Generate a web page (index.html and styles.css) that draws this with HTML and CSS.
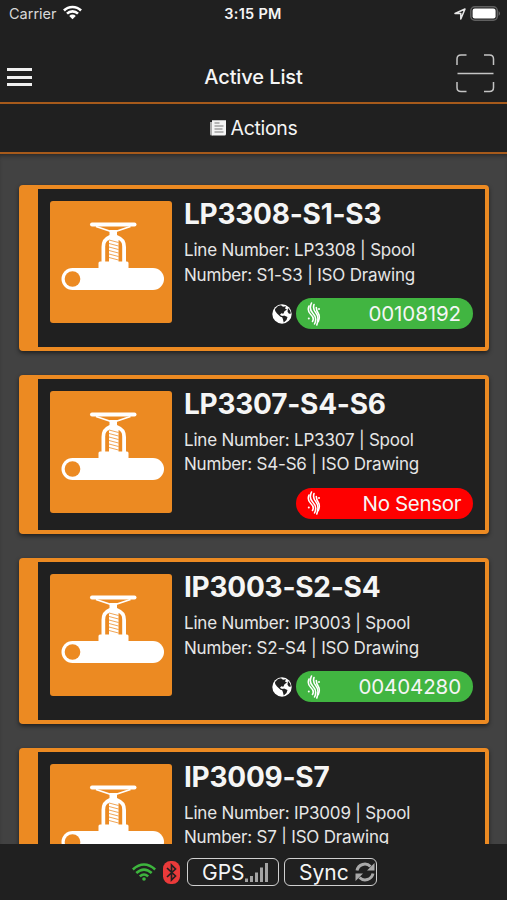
FILE: index.html
```
<!DOCTYPE html>
<html lang="en">
<head>
  <meta charset="utf-8" />
  <title>Active List</title>
  <link rel="stylesheet" href="styles.css">
</head>
<body>
  <!-- shared icons -->
  <svg class="defs" width="0" height="0">
    <symbol id="valve" viewBox="0 0 122 122">
      <rect x="40" y="21.500" width="46.500" height="4" rx="2" fill="#fff"/>
      <path d="M46 25.500L61 30.500M80.500 25.500L65.500 30.500" stroke="#fff" stroke-width="1.800"/>
      <path d="M59.500 29h7.500v5q9 3 9 12v17H51.500V46q0-9 8-12z" fill="#fff"/>
      <path d="M55.200 61V45.500q0-6 4.500-6.500h8q4.500.5 4.500 6.500V61z" fill="#ec8a22"/>
      <path d="M59 39h9.500v22H59z" fill="#fff"/>
      <path d="M59 39l9.500 2.500M59 42.500l9.500 2.500M59 46l9.500 2.500M59 49.500l9.500 2.500M59 53l9.500 2.500M59 56.500l9.500 2.500" stroke="#ec8a22" stroke-width=".9" opacity=".85"/>
      <rect x="48.500" y="60.500" width="30" height="10" rx="1.500" fill="#fff"/>
      <rect x="11.500" y="67" width="102.500" height="22" rx="11" fill="#fff"/>
      <circle cx="22.500" cy="78" r="7.800" fill="#ec8a22"/>
    </symbol>
    <symbol id="globe" viewBox="0 0 20 20">
      <circle cx="10" cy="10" r="9.700" fill="#fff"/>
      <path d="M3 5l3-3 3-.7 2 1.400 3-.5-1 2.300 2 1-2.500 1.800-1.200 2.400-2-.4-1.300 1.500 1.500 1 2 .2-.5 1.500-2.500-.7L5 9.500 3.200 7z" fill="#202020"/>
      <path d="M10 12.500l2-1 3.500 1.500-1 3-2.800 2.500-.7-3zM16 4l2 2.500 1 3-2 .2-1.500-2z" fill="#202020"/>
    </symbol>
    <symbol id="sensor" viewBox="0 0 14 24">
      <g fill="none" stroke="#fff" stroke-width="1.600" stroke-linecap="round">
        <path d="M2 4q-2 5 1.800 8.500t1.700 7"/>
        <path d="M4.500 1q-3 6 1.500 10.500t1.500 10.500"/>
        <path d="M7 2.500q-1.500 4.500 2 8.500t.8 12"/>
        <path d="M9.300 5.500q0 3 2 6t0 8"/>
      </g>
      <circle cx="12" cy="7" r="1" fill="#fff"/>
      <circle cx="1.800" cy="16.500" r="1" fill="#fff"/>
    </symbol>
    <symbol id="wifi" viewBox="0 0 20 15">
      <g fill="none" stroke="currentColor" stroke-width="2.700">
        <path d="M1 5.400a12.800 12.800 0 0 1 18 0"/>
        <path d="M4.200 8.700a8.200 8.200 0 0 1 11.600 0"/>
      </g>
      <path d="M6.600 11.100a4.800 4.800 0 0 1 6.800 0L10 14.600z" fill="currentColor"/>
    </symbol>
  </svg>

  <div class="app">
    <div class="status">
      <div class="carrier">Carrier <svg width="19" height="15"><use href="#wifi"/></svg></div>
      <div class="time">3:15 PM</div>
      <div class="power">
        <svg width="12" height="12" viewBox="0 0 12 12"><path d="M1 5.500L11 1 6.800 11V5.500z" fill="none" stroke="#e8e8e8" stroke-width="1.500" stroke-linejoin="round"/></svg>
        <svg width="31" height="15" viewBox="0 0 31 15">
          <rect x=".8" y=".8" width="26.500" height="13.400" rx="4" fill="none" stroke="#606060" stroke-width="1.500"/>
          <rect x="2.600" y="2.600" width="23" height="9.800" rx="2.200" fill="#fff"/>
          <path d="M28.700 5q2.300 2.500 0 5z" fill="#777"/>
        </svg>
      </div>
    </div>

    <div class="navbar">
      <div class="menu"><i></i><i></i><i></i></div>
      <h1>Active List</h1>
      <svg class="scan" width="39" height="39" viewBox="0 0 39 39">
        <path d="M1 11V5q0-4 4-4h5.500M28 1h5.500q4 0 4 4v6M1 28v5.500q0 4 4 4h5.500M28 37.500h5.500q4 0 4-4V28M1.500 19.500h36" fill="none" stroke="#c4c4c4" stroke-width="1.500"/>
      </svg>
    </div>

    <div class="actions">
      <svg width="16" height="16" viewBox="0 0 16 16">
        <path d="M0 2h2.500v13.500H1.500Q0 15.500 0 14z" fill="#aaa"/>
        <path d="M2 .3h14v13.700q0 1.500-1.500 1.500H2z" fill="#f4f4f4"/>
        <path d="M4.500 3h5M4.500 6h9M4.500 9h8M4.500 12h9" stroke="#777" stroke-width="1"/>
      </svg>
      <span>Actions</span>
    </div>

    <div class="list">
      <div class="card">
        <svg class="thumb"><use href="#valve"/></svg>
        <div class="info">
          <h2>LP3308-S1-S3</h2>
          <p>Line Number: LP3308 | Spool<br>Number: S1-S3 | ISO Drawing</p>
          <div class="tags">
            <svg class="globe"><use href="#globe"/></svg>
            <div class="pill"><svg class="sensor"><use href="#sensor"/></svg><span>00108192</span></div>
          </div>
        </div>
      </div>

      <div class="card short">
        <svg class="thumb"><use href="#valve"/></svg>
        <div class="info">
          <h2>LP3307-S4-S6</h2>
          <p>Line Number: LP3307 | Spool<br>Number: S4-S6 | ISO Drawing</p>
          <div class="tags">
            <div class="pill none"><svg class="sensor"><use href="#sensor"/></svg><span>No Sensor</span></div>
          </div>
        </div>
      </div>

      <div class="card">
        <svg class="thumb"><use href="#valve"/></svg>
        <div class="info">
          <h2>IP3003-S2-S4</h2>
          <p>Line Number: IP3003 | Spool<br>Number: S2-S4 | ISO Drawing</p>
          <div class="tags">
            <svg class="globe"><use href="#globe"/></svg>
            <div class="pill"><svg class="sensor"><use href="#sensor"/></svg><span>00404280</span></div>
          </div>
        </div>
      </div>

      <div class="card">
        <svg class="thumb"><use href="#valve"/></svg>
        <div class="info">
          <h2>IP3009-S7</h2>
          <p>Line Number: IP3009 | Spool<br>Number: S7 | ISO Drawing</p>
        </div>
      </div>
    </div>

    <div class="footer">
      <svg class="net" width="24" height="18" viewBox="0 0 24 18">
        <g fill="none" stroke="#3db53d" stroke-width="2.600">
          <path d="M.8 6.500q11.200-10 22.400 0"/>
          <path d="M4.300 10q7.700-6.800 15.400 0"/>
          <path d="M7.800 13.400q4.200-3.800 8.400 0"/>
        </g>
        <circle cx="12" cy="16" r="1.800" fill="#3db53d"/>
      </svg>
      <svg class="bt" width="17" height="23" viewBox="0 0 17 23">
        <rect width="17" height="23" rx="7.500" fill="#ea3a3a"/>
        <path d="M4 7l8.500 8-4 4V4l4 4L4 16" fill="none" stroke="#202020" stroke-width="1.700"/>
      </svg>
      <div class="btn gps">GPS<svg width="23" height="20" viewBox="0 0 23 20">
        <path d="M0 16.500h3V20H0zM5 14h3v6H5zM10 10.500h3V20h-3zM15 5.500h3V20h-3zM20 1h3v19h-3z" fill="#a3a3a3"/>
      </svg></div>
      <div class="btn sync">Sync<svg width="20" height="20" viewBox="0 0 20 20">
        <g fill="none" stroke="#a9a9a9" stroke-width="3">
          <path d="M2 8.500A8 8 0 0 1 15.500 4.500"/>
          <path d="M18 11.500A8 8 0 0 1 4.500 15.500"/>
        </g>
        <path d="M19.500 1v7.500H12zM.5 19v-7.500H8z" fill="#a9a9a9"/>
      </svg></div>
    </div>
  </div>
</body>
</html>
```
FILE: styles.css
```
* { box-sizing: border-box; }
body { margin: 0; background: #202020; color: #f5f5f5; font-family: Inter, 'Liberation Sans', sans-serif; }
h1, h2, p { margin: 0; font-weight: normal; }
svg { display: block; flex: none; }
.defs { display: none; }
.app { height: 900px; display: flex; flex-direction: column; overflow: hidden; }

.status { height: 50px; flex: none; display: grid; grid-template-columns: 1fr auto 1fr; align-items: start; padding: 5px 7px 0 9px; font-size: 14.500px; line-height: 18px; }
.carrier { display: flex; gap: 6px; color: #d8d8d8; }
.carrier svg { color: #fff; }
.time { font-weight: 600; letter-spacing: .3px; margin-right: 3px; }
.power { display: flex; justify-content: flex-end; align-items: center; gap: 4px; padding-top: 1px; margin-right: -1px; }

.navbar { height: 54px; flex: none; display: grid; grid-template-columns: 1fr auto 1fr; align-items: center; padding: 0 12px 0 7px; border-bottom: 2px solid #a65a1b; }
.menu { width: 25px; display: grid; gap: 4.500px; padding-top: 2px; }
.menu i { height: 3px; background: #f0f0f0; }
.navbar h1 { font-size: 20px; font-weight: 500; line-height: 24px; letter-spacing: -.1px; padding: 2px 0 0 5px; }
.scan { justify-self: end; margin-top: -5px; }

.actions { height: 50px; flex: none; display: flex; justify-content: center; align-items: center; gap: 5px; font-size: 19.500px; letter-spacing: -.35px; border-bottom: 2px solid #a65a1b; }

.list { flex: 1; min-height: 0; overflow: hidden; background: #424242; display: flex; flex-direction: column; gap: 24px; padding: 31px 18px 0 19px; box-shadow: inset 0 4px 5px -3px #222; }
.card { height: 165.500px; flex: none; display: flex; gap: 12px; padding: 12px 12px 0; background: #202020; border: 4px solid #ec8a22; border-left-width: 19px; border-radius: 4px; box-shadow: 0 2px 4px #0008; }
.card.short { height: 159.500px; }
.thumb { width: 122px; height: 122px; background: #ec8a22; border-radius: 3px; }
.info { flex: 1; }
.info h2 { font-size: 28px; font-weight: 700; line-height: 34px; letter-spacing: -.25px; margin-top: -4px; white-space: nowrap; }
.info p { font-size: 17px; line-height: 24.500px; letter-spacing: -.2px; margin-top: 7px; white-space: nowrap; color: #e6e6e6; }
.tags { display: flex; justify-content: flex-end; align-items: center; gap: 4px; margin-top: 11px; }
.globe { width: 20px; height: 20px; }
.pill { width: 177px; height: 31px; display: flex; align-items: center; justify-content: space-between; padding: 0 12px 0 11px; border-radius: 16px; background: #41b541; font-size: 20.500px; letter-spacing: -.1px; }
.pill.none { background: #fe0000; letter-spacing: -.35px; }
.sensor { width: 14px; height: 24px; }

.footer { height: 56px; flex: none; display: flex; justify-content: center; align-items: center; padding-left: 2px; }
.net { margin-right: 7px; }
.bt { margin-right: 7px; }
.btn { height: 28px; display: flex; align-items: center; border: 1.500px solid #d0d0d0; border-radius: 6px; font-size: 21px; }
.gps { width: 92px; padding-left: 14px; margin-right: 5px; }
.sync { width: 93px; padding-left: 14px; gap: 6px; }
```
